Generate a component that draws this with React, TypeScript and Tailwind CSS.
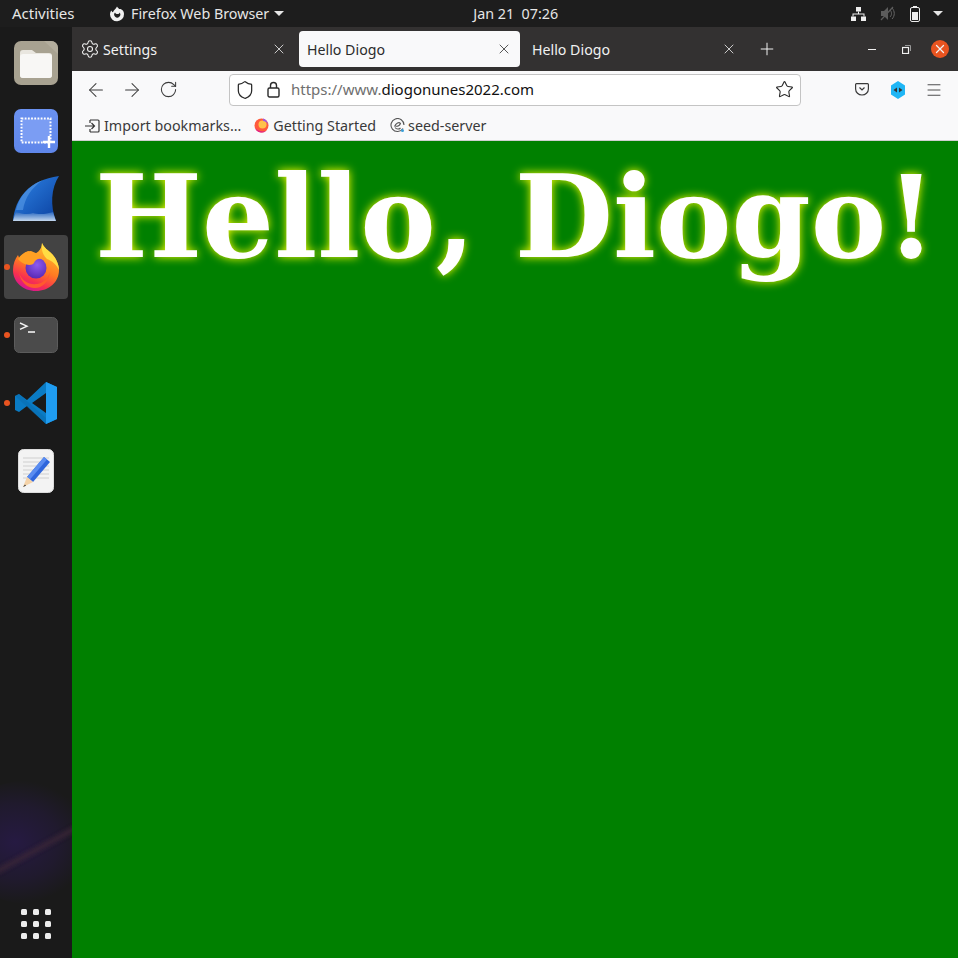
import { Shield, ArrowLeft, ArrowRight, RotateCw, Star, Menu, Settings, X, Plus } from 'lucide-react'

const uiFont = "font-['Noto_Sans',sans-serif]"

function FilesIcon() {
  return (
    <svg width="44" height="44" viewBox="0 0 44 44">
      <rect width="44" height="44" rx="7" fill="#a8a291" />
      <path d="M30 0h7a7 7 0 0 1 7 7v6z" fill="#b3ad9d" />
      <path d="M6 12a3 3 0 0 1 3-3h9l4 3h13a3 3 0 0 1 3 3v19a3 3 0 0 1-3 3H9a3 3 0 0 1-3-3z" fill="#e9e6df" />
      <rect x="6" y="13" width="32" height="24" rx="3" fill="#f8f7f5" />
    </svg>
  )
}

function ScreenshotIcon() {
  return (
    <svg width="44" height="44" viewBox="0 0 44 44">
      <defs>
        <linearGradient id="shot" x1="0" y1="0" x2="0" y2="1">
          <stop offset="0" stopColor="#6a91f0" />
          <stop offset="1" stopColor="#5f86ea" />
        </linearGradient>
      </defs>
      <rect width="44" height="44" rx="7" fill="url(#shot)" />
      <rect x="7.500" y="9.500" width="29" height="24" fill="#7b9df3" stroke="#fff" strokeWidth="2" strokeDasharray="1.800 1.400" />
      <path d="M35 27v12M29 33h12" stroke="#fff" strokeWidth="2.400" />
    </svg>
  )
}

function WiresharkIcon() {
  return (
    <svg width="46" height="46" viewBox="0 0 46 46">
      <defs>
        <linearGradient id="fin" x1="0" y1="0" x2="1" y2="1">
          <stop offset="0" stopColor="#2f86e8" />
          <stop offset="1" stopColor="#0a3f9e" />
        </linearGradient>
        <linearGradient id="wave" x1="0" y1="0" x2="0" y2="1">
          <stop offset="0" stopColor="#2a68c0" />
          <stop offset="1" stopColor="#c4d8ee" />
        </linearGradient>
      </defs>
      <path d="M0 45C2 22 16 4 46 0C38 12 37 30 43 45z" fill="url(#fin)" />
      <path d="M3 34C6 22 14 10 30 4C18 12 12 22 10 34z" fill="#5fa0ea" opacity="0.55" />
      <path d="M0 45c1-4 2-7 3-9 6 2 12 3 17 1 6 2 14 1 20-1l3 9z" fill="url(#wave)" />
    </svg>
  )
}

function FirefoxIcon() {
  return (
    <svg width="46" height="48" viewBox="0 0 46 48">
      <defs>
        <linearGradient id="ffBody" x1="0.8" y1="0.1" x2="0.4" y2="1">
          <stop offset="0" stopColor="#ffbd2e" />
          <stop offset="0.5" stopColor="#ff7a22" />
          <stop offset="0.8" stopColor="#f8304f" />
          <stop offset="1" stopColor="#d8188c" />
        </linearGradient>
        <radialGradient id="ffGlobe" cx="0.55" cy="0.35" r="0.65">
          <stop offset="0" stopColor="#8d5bf0" />
          <stop offset="1" stopColor="#5a2ab5" />
        </radialGradient>
      </defs>
      <path d="M29 0c2 5 6 7 10 11 5 5 7 12 7 16 0 12-10 21-23 21C10 48 0 39 0 27c0-6 2-11 5-15l2 5c1-5 5-8 9-9-1 3 0 4 2 5 5-2 11-6 11-13z" fill="url(#ffBody)" />
      <path d="M29 0c2 5 6 7 10 11 4 4 7 11 7 16-3-6-7-9-12-11-4-4-6-9-5-16z" fill="#ffdc44" />
      <circle cx="23" cy="25" r="10.500" fill="url(#ffGlobe)" />
      <path d="M5 16c3-5 8-8 13-8 4 2 9 3 11 8-4-1-7 1-8 4-2 3-10 3-16-4z" fill="#ffa024" />
      <path d="M6 30c3 8 10 12 18 11 6-1 11-5 13-12-1 10-8 16-15 16C14 45 8 39 6 30z" fill="#ff5a2e" />
    </svg>
  )
}

function TerminalIcon() {
  return (
    <svg width="44" height="36" viewBox="0 0 44 36">
      <rect x="0.500" y="0.500" width="43" height="35" rx="5" fill="#4b4b4b" stroke="#5c5c5c" />
      <path d="M6 6l7 3.200-7 3.200" fill="none" stroke="#f2f2f2" strokeWidth="1.400" />
      <path d="M14 15h7" stroke="#f2f2f2" strokeWidth="1.600" />
    </svg>
  )
}

function VscodeIcon() {
  return (
    <svg width="42" height="42" viewBox="0 0 42 42">
      <path d="M31 0L12 18 4 12 0 14v14l4 2 8-6 19 18 11-5V5zM31 11v20L17 21z" fill="#0a7bc4" />
      <path d="M31 0l11 5v32l-11 5z" fill="#1f9cf0" />
      <path d="M0 14l4-2 27 24v6L0 14z" fill="#0a6eb0" opacity="0.55" />
    </svg>
  )
}

function EditorIcon() {
  return (
    <svg width="36" height="44" viewBox="0 0 36 44">
      <rect x="0.500" y="0.500" width="35" height="43" rx="5" fill="#f3f3f3" stroke="#dcdcdc" />
      <path d="M5 9h26M5 13h26M5 17h26M5 21h26M5 25h26M5 29h26" stroke="#cfcfcf" strokeWidth="1" />
      <path d="M26 8l6 5-17 20-6-5z" fill="#2f66dc" />
      <path d="M26 8l3 2.500-17 20-3-2.500z" fill="#5a8cf0" />
      <path d="M9 28l6 5-10 5z" fill="#f4d2a8" />
      <path d="M7 35.500l-2 2.500 3-1.200z" fill="#333" />
    </svg>
  )
}

function DockItem({ icon, running, active }: { icon: React.ReactNode; running?: boolean; active?: boolean }) {
  return (
    <div className="relative flex h-[68px] w-[72px] items-center justify-center">
      {active && <div className="flex h-[64px] w-[64px] items-center justify-center rounded-[4px] bg-[#434343]">{icon}</div>}
      {!active && icon}
      {running && <span className="absolute left-[4px] top-[31px] h-[6px] w-[6px] rounded-full bg-[#e95420]" />}
    </div>
  )
}

function Dock() {
  return (
    <aside className="relative flex w-[72px] shrink-0 flex-col overflow-hidden bg-[#1a1a1a] pt-[2px]">
      {/* bit of wallpaper showing through the dock */}
      <svg className="absolute bottom-0 left-0" width="72" height="178" viewBox="0 0 72 178">
        <defs>
          <radialGradient id="glow" cx="0.4" cy="0.5" r="0.5">
            <stop offset="0" stopColor="#261a42" />
            <stop offset="0.6" stopColor="#201a2e" />
            <stop offset="1" stopColor="#1a1a1a" />
          </radialGradient>
          <filter id="streak" filterUnits="userSpaceOnUse" x="-20" y="20" width="120" height="100">
            <feGaussianBlur stdDeviation="2" />
          </filter>
        </defs>
        <ellipse cx="30" cy="62" rx="75" ry="62" fill="url(#glow)" />
        <path d="M-4 92L76 48" stroke="#3c2738" strokeWidth="5" opacity="0.8" filter="url(#streak)" />
      </svg>
      <div className="relative flex flex-col">
        <DockItem icon={<FilesIcon />} />
        <DockItem icon={<ScreenshotIcon />} />
        <DockItem icon={<WiresharkIcon />} />
        <DockItem icon={<FirefoxIcon />} active running />
        <DockItem icon={<TerminalIcon />} running />
        <DockItem icon={<VscodeIcon />} running />
        <DockItem icon={<EditorIcon />} />
      </div>
      <div className="relative mb-[19px] mt-auto grid grid-cols-3 gap-[6px] self-center">
        {Array.from({ length: 9 }).map((_, i) => (
          <span key={i} className="h-[6px] w-[6px] rounded-[1.500px] bg-[#ececec]" />
        ))}
      </div>
    </aside>
  )
}

function TopBar() {
  return (
    <header className={`flex h-[27px] shrink-0 items-center bg-[#1d1d1d] text-[14.300px] text-[#e6e6e6] ${uiFont}`}>
      <span className="ml-[12px] w-[97px] text-[15px]">Activities</span>
      <svg width="16" height="16" viewBox="0 0 16 16" className="mr-[6px]">
        <path d="M8 .500c.5 1.200 1.500 1.500 2 2.500 3-.5 5 2 5 5A7 7 0 0 1 1 8.500c0-1.500.5-3 1.500-4 .2 1 .8 1.500 1.400 1.800C4.800 4 6.800 3 8 .500z" fill="#efefef" />
        <path d="M6 6.500a3 3 0 1 0 4.500 0c0 1-1 1.500-2 1.500S6.500 7.500 6 6.500z" fill="#1d1d1d" />
      </svg>
      <span>Firefox Web Browser</span>
      <span className="ml-[5px] h-0 w-0 border-x-[5px] border-t-[5px] border-x-transparent border-t-[#e6e6e6]" />
      <span className="ml-[189px] whitespace-pre">Jan 21  07:26</span>
      <div className="ml-auto mr-[15px] flex items-center">
        <svg width="15" height="14" viewBox="0 0 15 14" fill="#eee">
          <rect x="5" y="0" width="5" height="4.500" />
          <rect x="0" y="9.500" width="5" height="4.500" />
          <rect x="10" y="9.500" width="5" height="4.500" />
          <path d="M7 4.500h1V6.500h5.500V9.500h-1V7.500h-10V9.500h-1V6.500H7z" />
        </svg>
        <svg width="15" height="15" viewBox="0 0 15 15" className="ml-[14px]">
          <path d="M1 5h3l4-4v13l-4-4H1z" fill="#5c5c5c" />
          <path d="M10 4c2 2 2 5 0 7M12 2c3 3 3 8 0 11" fill="none" stroke="#666" />
          <path d="M1 14L13 1" stroke="#5c5c5c" strokeWidth="1.200" />
        </svg>
        <svg width="10" height="16" viewBox="0 0 10 16" className="ml-[15px]">
          <rect x="0.500" y="1.500" width="9" height="14" rx="1.500" fill="none" stroke="#eee" />
          <rect x="3" y="0" width="4" height="1.500" fill="#eee" />
          <rect x="2" y="6" width="6" height="8" fill="#eee" />
        </svg>
        <span className="ml-[13px] h-0 w-0 border-x-[5px] border-t-[5px] border-x-transparent border-t-[#e6e6e6]" />
      </div>
    </header>
  )
}

function TabBar() {
  return (
    <div className="flex h-[44px] shrink-0 items-center bg-[#333131] text-[14.200px] text-[#f1f1f1]">
      <div className="flex h-[36px] w-[227px] items-center pl-[8px] pr-[12px]">
        <Settings size={20} strokeWidth={1.300} className="mr-[3px]" />
        <span className="mt-[1px]">Settings</span>
        <X size={16} strokeWidth={1.200} className="ml-auto" />
      </div>
      <div className="flex h-[36px] w-[221px] items-center rounded-[4px] bg-[#f9f9fa] pl-[8px] pr-[8px] text-[#2c2c2c]">
        <span className="mt-[1px]">Hello Diogo</span>
        <X size={16} strokeWidth={1.200} className="ml-auto" />
      </div>
      <div className="flex h-[36px] w-[221px] items-center pl-[12px] pr-[4px]">
        <span className="mt-[1px]">Hello Diogo</span>
        <X size={16} strokeWidth={1.200} className="ml-auto" />
      </div>
      <Plus size={20} strokeWidth={1.200} className="ml-[16px]" />
      <div className="ml-auto mr-[9px] flex items-center">
        <span className="h-px w-[8px] bg-[#f1f1f1]" />
        <svg width="9" height="9" viewBox="0 0 9 9" className="ml-[26px]" fill="none" stroke="#f1f1f1">
          <rect x="0.500" y="2.500" width="6" height="6" strokeWidth="1.200" />
          <path d="M3 .500h5.500V6" stroke="#999" />
        </svg>
        <span className="ml-[20px] flex h-[18px] w-[18px] items-center justify-center rounded-full bg-[#e95420]">
          <X size={14} strokeWidth={2.200} />
        </span>
      </div>
    </div>
  )
}

function NavBar() {
  return (
    <div className="flex h-[37px] shrink-0 items-center bg-[#f9f9fa] text-[#3a3a3a]">
      <div className="ml-[6px] flex w-[151px] items-center">
        <div className="flex w-[36px] justify-center"><ArrowLeft size={22} strokeWidth={1.100} /></div>
        <div className="flex w-[36px] justify-center"><ArrowRight size={22} strokeWidth={1.100} /></div>
        <div className="flex w-[36px] justify-center"><RotateCw size={19} strokeWidth={1.300} /></div>
      </div>
      <div className="flex h-[32px] w-[572px] items-center rounded-[4px] border border-[#c4c4c4] bg-white pl-[5px] pr-[6px]">
        <Shield size={20} strokeWidth={1.500} className="text-[#2a2a2a]" />
        <svg width="13" height="17" viewBox="0 0 13 17" fill="none" stroke="#2a2a2a" strokeWidth="1.400" className="ml-[12px]">
          <rect x="1" y="7" width="11" height="9" rx="1.500" />
          <path d="M3.500 7V4.500a3 3 0 0 1 6 0V7" />
        </svg>
        <span className="ml-[11px] text-[15px] text-[#6f6f6f]">
          https://www.<span className="text-[#111]">diogonunes2022.com</span>
        </span>
        <Star size={19} strokeWidth={1.400} className="ml-auto text-[#2a2a2a]" />
      </div>
      <div className="ml-auto mr-[15px] flex items-center">
        <svg width="14" height="13" viewBox="0 0 14 13" fill="none" stroke="#3a3a3a" strokeWidth="1.200">
          <path d="M1.500 .600h11a1 1 0 0 1 .900 1V6a6.400 6 0 0 1-12.800 0V1.600a1 1 0 0 1 .900-1z" />
          <path d="M4.500 4.500L7 7l2.500-2.500" />
        </svg>
        <svg width="16" height="18" viewBox="0 0 16 18" className="ml-[21px]">
          <path d="M8 0l7 4.500v9L8 18l-7-4.500v-9z" fill="#1fb6f5" />
          <path d="M3.500 9L7 6.500v5zM12.500 9L9 6.500v5z" fill="#333" />
        </svg>
        <Menu size={18} strokeWidth={1.200} className="ml-[19px]" />
      </div>
    </div>
  )
}

function BookmarksBar() {
  return (
    <div className="flex h-[33px] shrink-0 items-center border-b border-[#cfcfcf] bg-[#f9f9fa] pl-[13px] pt-[3px] text-[14.300px] text-[#3a3a3a]">
      <svg width="15" height="14" viewBox="0 0 15 14" fill="none" stroke="#333" strokeWidth="1.200" className="mr-[4px]">
        <path d="M5 1h8a1 1 0 0 1 1 1v10a1 1 0 0 1-1 1H5M5 1v3M5 10v3M0 7h9M6.500 4L9.500 7l-3 3" />
      </svg>
      <span>Import bookmarks…</span>
      <svg width="15" height="15" viewBox="0 0 15 15" className="ml-[13px] mr-[4px]">
        <circle cx="7.500" cy="7.500" r="7" fill="#ff5a3c" />
        <circle cx="8.500" cy="6.500" r="4" fill="#ffc24a" />
        <path d="M9 .500a7 7 0 0 1 5 6c-1-2-3-3.500-5-3.500z" fill="#a05ae0" />
        <path d="M1 10a7 7 0 0 0 11 3c-4 1-8 0-11-3z" fill="#e0208c" />
      </svg>
      <span>Getting Started</span>
      <svg width="15" height="15" viewBox="0 0 15 15" fill="none" stroke="#555" strokeWidth="1.100" className="ml-[14px] mr-[3px]">
        <path d="M13 10.500A6.500 6.500 0 1 1 14 7" />
        <path d="M4.500 8.500C6 5 9 3.500 10.500 5.500 9.500 8 7 8.500 5.500 8M5 9.500c1.500 2 4 2 5.500.5" />
        <circle cx="12.500" cy="12.500" r="1.500" fill="#3a9fd8" stroke="none" />
      </svg>
      <span>seed-server</span>
    </div>
  )
}

export default function App() {
  return (
    <div className="flex h-screen w-full flex-col overflow-hidden bg-[#1a1a1a]">
      <TopBar />
      <div className="flex min-h-0 flex-1">
        <Dock />
        <main className={`flex min-w-0 flex-1 flex-col ${uiFont}`}>
          <TabBar />
          <NavBar />
          <BookmarksBar />
          <div className="flex-1 overflow-hidden bg-[#008000]">
            <h1 className="whitespace-nowrap pl-[23px] font-['DejaVu_Serif',serif] text-[113.300px] font-bold leading-[153px] text-white [text-shadow:0_0_10px_#ffff00]">
              Hello, Diogo!
            </h1>
          </div>
        </main>
      </div>
    </div>
  )
}
